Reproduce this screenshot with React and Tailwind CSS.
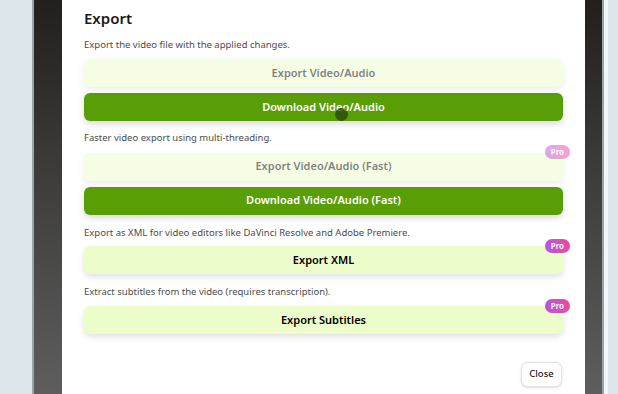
import React from 'react';

const font = { fontFamily: '"Noto Sans", "Open Sans", sans-serif' };

function Pro({ faded }) {
  return (
    <span
      className={`absolute -top-[7px] -right-[7px] h-[14px] px-[6px] rounded-full bg-gradient-to-r from-[#b455e0] to-[#ec4899] text-white text-[8px] font-semibold leading-[14px] ${faded ? 'opacity-50' : ''}`}
    >
      Pro
    </span>
  );
}

function LightButton({ children, disabled, pro, className = '' }) {
  return (
    <div className={`relative ${className}`}>
      <button
        className={`w-full h-[28px] rounded-md bg-[#ecfccb] text-[11px] font-semibold text-black shadow-[0_3px_6px_rgba(0,0,0,0.12)] ${disabled ? 'opacity-50' : ''}`}
      >
        {children}
      </button>
      {pro ? <Pro faded={disabled} /> : null}
    </div>
  );
}

function GreenButton({ children, className = '' }) {
  return (
    <button
      className={`w-full h-[28px] rounded-md bg-[#5a9e07] text-[11px] font-semibold text-white shadow-[0_3px_6px_rgba(0,0,0,0.15)] ${className}`}
    >
      {children}
    </button>
  );
}

function Desc({ children, className = '' }) {
  return <p className={`text-[9.5px] leading-[14px] text-[#4b4b4b] ${className}`}>{children}</p>;
}

export default function App() {
  return (
    <div className="w-[618px] h-[394px] flex bg-[#dbe7eb] overflow-hidden" style={font}>
      <div className="w-[32px] shrink-0" />
      <div className="w-[572px] h-full shrink-0 flex border-x-2 border-[#9aa3a6] bg-gradient-to-b from-[#221f1d] via-[#3b3a39] via-40% to-[#5e5e5e]">
        <div className="ml-[28px] w-[523px] h-full bg-white px-[22px] pt-[7px] relative">
          <h2 className="text-[15px] leading-[22px] font-semibold text-[#1a1a1a]">Export</h2>

          <Desc className="mt-[9px]">Export the video file with the applied changes.</Desc>
          <LightButton disabled className="mt-[7px]">Export Video/Audio</LightButton>
          <GreenButton className="mt-[6px]">Download Video/Audio</GreenButton>

          <Desc className="mt-[10px]">Faster video export using multi-threading.</Desc>
          <LightButton disabled pro className="mt-[7px]">Export Video/Audio (Fast)</LightButton>
          <GreenButton className="mt-[6px]">Download Video/Audio (Fast)</GreenButton>

          <Desc className="mt-[11px]">Export as XML for video editors like DaVinci Resolve and Adobe Premiere.</Desc>
          <LightButton pro className="mt-[6px]">Export XML</LightButton>

          <Desc className="mt-[11px]">Extract subtitles from the video (requires transcription).</Desc>
          <LightButton pro className="mt-[7px]">Export Subtitles</LightButton>

          <div className="flex justify-end mt-[28px]">
            <button className="h-[25px] w-[41px] mr-[1px] rounded-md border border-[#e2e2e2] bg-white text-[9.5px] font-medium text-[#222] shadow-sm">
              Close
            </button>
          </div>

          <span className="absolute left-[273px] top-[108px] w-[13px] h-[13px] rounded-full bg-[#1f3d10] opacity-70" />
        </div>
      </div>
      <div className="w-[4px] shrink-0 bg-[#f3f6f7]" />
    </div>
  );
}
